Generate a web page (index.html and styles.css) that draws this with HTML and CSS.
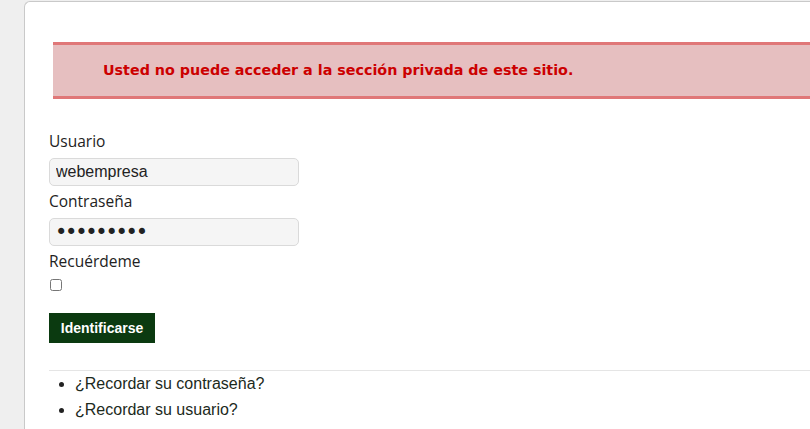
FILE: index.html
```html
<!DOCTYPE html>
<html lang="es">
<head>
    <meta charset="UTF-8">
    <title>Acceso</title>
    <link rel="stylesheet" href="styles.css">
</head>
<body>
    <div class="page">
        <div class="message">
            <p>Usted no puede acceder a la sección privada de este sitio.</p>
        </div>
        <form class="login">
            <label for="username">Usuario</label>
            <input type="text" id="username" value="webempresa">
            <label for="password">Contraseña</label>
            <input type="password" id="password" value="webempres">
            <label for="remember">Recuérdeme</label>
            <input type="checkbox" id="remember">
            <div class="actions">
                <button type="submit">Identificarse</button>
            </div>
        </form>
        <ul class="links">
            <li><a href="#">¿Recordar su contraseña?</a></li>
            <li><a href="#">¿Recordar su usuario?</a></li>
        </ul>
    </div>
</body>
</html>
```

FILE: styles.css
```css
body {
    margin: 0;
    background: #efefef;
    font-family: "Liberation Sans", Arial, sans-serif;
    color: #222;
    overflow: hidden;
}
.page {
    margin: 1px 0 0 24px;
    background: #fff;
    border: 1px solid #c9c9c9;
    border-right: none;
    border-radius: 6px 0 0 0;
    padding: 40px 0 40px 24px;
    min-height: 500px;
}
.message {
    margin-left: 4px;
    background: #e6bfc0;
    border-top: 3px solid #e07778;
    border-bottom: 3px solid #e07778;
    padding: 0 0 0 50px;
}
.message p {
    margin: 0;
    height: 51px;
    line-height: 51px;
    font-family: "DejaVu Sans", sans-serif;
    font-weight: bold;
    font-size: 14.3px;
    color: #cc0000;
}
.login {
    display: flex;
    flex-direction: column;
    align-items: flex-start;
    margin-top: 32px;
}
label {
    font-family: "Open Sans", sans-serif;
    font-size: 15.5px;
    line-height: 20px;
    color: #222;
    margin-bottom: 7px;
}
input[type="text"], input[type="password"] {
    box-sizing: border-box;
    width: 250px;
    height: 28px;
    margin: 0 0 5px;
    padding: 0 6px;
    border: 1px solid #dadada;
    border-radius: 5px;
    background: #f5f5f5;
    font-family: "Liberation Sans", Arial, sans-serif;
    font-size: 16px;
    color: #222;
}
input[type="password"] {
    font-family: "DejaVu Sans", sans-serif;
    font-size: 21px;
    letter-spacing: -2.3px;
    padding-left: 5px;
}
input[type="checkbox"] {
    width: 12px;
    height: 12px;
    margin: 1px 0 0 1px;
}
.actions {
    margin-top: 22px;
}
button {
    background: #0b3a10;
    color: #fff;
    border: none;
    width: 106px;
    height: 30px;
    font-family: "Liberation Sans", Arial, sans-serif;
    font-weight: bold;
    font-size: 14px;
    cursor: pointer;
}
.links {
    margin: 27px 0 0;
    border-top: 1px solid #e5e5e5;
    padding: 0 0 0 26px;
    font-size: 16px;
    line-height: 26px;
}
.links a {
    color: #1c2a1c;
    text-decoration: none;
}
```
